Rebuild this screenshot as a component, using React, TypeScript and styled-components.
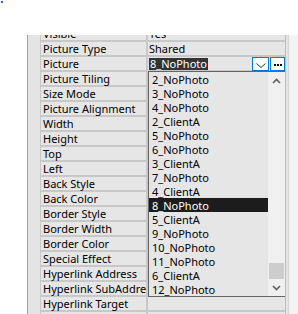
import { useLayoutEffect, useRef } from 'react'
import styled, { createGlobalStyle } from 'styled-components'

const GlobalStyle = createGlobalStyle`
	html, body {
		margin: 0;
		padding: 0;
		background: #fff;
	}
	body {
		font-family: "Noto Sans", "Segoe UI", sans-serif;
		font-size: 11px;
		color: #000;
	}
`

const Screen = styled.div`
	width: 298px;
	height: 314px;
	overflow: hidden;
	background: #fff;
	display: flex;
	flex-direction: column;
`

const FocusDot = styled.div`
	width: 2px;
	height: 2px;
	margin: 1px 0 0 1px;
	background: #3b5bdb;
`

const Panel = styled.div`
	flex: 1;
	min-height: 0;
	margin: 32px 0 0 27px;
	display: flex;
	border-left: 1px solid #a0a0a0;
	background: #f0f0f0;
`

const Gutter = styled.div`
	width: 12px;
	background: #e4e4e4;
`

const Sheet = styled.div`
	width: 244px;
	overflow: hidden;
	border-left: 1px solid #c8c8c8;
	border-right: 1px solid #bdbdbd;
`

const Rows = styled.div`
	position: relative;
`

const Row = styled.div`
	display: grid;
	grid-template-columns: 105px 137px;
	column-gap: 2px;
	padding-bottom: 2px;
	background: #c8c8c8;
`

const NameCell = styled.div`
	height: 13px;
	line-height: 13px;
	padding-left: 2px;
	background: #e6e6e6;
	white-space: nowrap;
	overflow-x: clip;
	overflow-y: visible;
`

const ValueCell = styled.div`
	position: relative;
	height: 13px;
	line-height: 13px;
	padding-left: 1px;
	background: #e6e6e6;
	display: flex;
	align-items: flex-start;
	white-space: nowrap;
`

const Selected = styled.span`
	margin-top: 1px;
	height: 12px;
	line-height: 12px;
	padding: 0 1px;
	background: #333;
	color: #fff;
`

const Buttons = styled.div`
	margin-left: auto;
	display: flex;
	gap: 1px;
`

const EditButton = styled.div<{ $w: number; $low?: boolean }>`
	box-sizing: border-box;
	width: ${(p) => p.$w}px;
	height: 14px;
	padding-bottom: ${(p) => (p.$low ? 2 : 0)}px;
	border: 1px solid #0078d7;
	background: #fff;
	display: flex;
	align-items: ${(p) => (p.$low ? 'flex-end' : 'center')};
	justify-content: center;
	gap: 1px;
`

const Dot = styled.span`
	width: 2px;
	height: 2px;
	margin-top: 2px;
	background: #000;
`

const RightPane = styled.div`
	flex: 1;
	border-left: 2px solid #e4e4e4;
	box-shadow: inset 1px 0 #d4d4d4;
	background: #f3f3f3;
`

const DropList = styled.div`
	position: absolute;
	top: 14px;
	left: 0;
	z-index: 2;
	box-sizing: border-box;
	width: 138px;
	height: 226px;
	border: 1px solid #646464;
	background: #e6e6e6;
	display: flex;
`

const Items = styled.div`
	flex: 1;
	overflow: hidden;
`

const Item = styled.div<{ $active?: boolean }>`
	height: 14px;
	line-height: 15px;
	padding-left: 3px;
	background: ${(p) => (p.$active ? '#1c1c1c' : 'transparent')};
	color: ${(p) => (p.$active ? '#fff' : '#000')};
`

const ScrollBar = styled.div`
	width: 17px;
	background: #f0f0f0;
	display: flex;
	flex-direction: column;
`

const ArrowBox = styled.div`
	height: 17px;
	display: flex;
	align-items: center;
	justify-content: center;
`

const Track = styled.div`
	flex: 1;
	display: flex;
	flex-direction: column;
	justify-content: flex-end;
`

const Thumb = styled.div`
	height: 16px;
	margin: 0 1px;
	background: #cdcdcd;
`

const names = [
	'Visible',
	'Picture Type',
	'Picture',
	'Picture Tiling',
	'Size Mode',
	'Picture Alignment',
	'Width',
	'Height',
	'Top',
	'Left',
	'Back Style',
	'Back Color',
	'Border Style',
	'Border Width',
	'Border Color',
	'Special Effect',
	'Hyperlink Address',
	'Hyperlink SubAddress',
	'Hyperlink Target',
	'',
]

const values: Record<string, string> = {
	Visible: 'Yes',
	'Picture Type': 'Shared',
}

const pictures = [
	'2_NoPhoto',
	'3_NoPhoto',
	'4_NoPhoto',
	'2_ClientA',
	'5_NoPhoto',
	'6_NoPhoto',
	'3_ClientA',
	'7_NoPhoto',
	'4_ClientA',
	'8_NoPhoto',
	'5_ClientA',
	'9_NoPhoto',
	'10_NoPhoto',
	'11_NoPhoto',
	'6_ClientA',
	'12_NoPhoto',
]

const Chevron = ({ up }: { up?: boolean }) => (
	<svg width="9" height="6" viewBox="0 0 9 6">
		<polyline
			points={up ? '1,5 4.5,1.5 8,5' : '1,1 4.5,4.5 8,1'}
			fill="none"
			stroke="#606060"
			strokeWidth="1.7"
		/>
	</svg>
)

const PicturePicker = () => (
	<>
		<Selected>8_NoPhoto</Selected>
		<Buttons>
			<EditButton $w={17} $low>
				<svg width="10" height="5" viewBox="0 0 10 5">
					<polyline points="0.5,0.5 5,4.5 9.5,0.5" fill="none" stroke="#333" strokeWidth="1" />
				</svg>
			</EditButton>
			<EditButton $w={15}>
				<Dot />
				<Dot />
				<Dot />
			</EditButton>
		</Buttons>
		<DropList>
			<Items>
				{pictures.map((p) => (
					<Item key={p} $active={p === '8_NoPhoto'}>
						{p}
					</Item>
				))}
			</Items>
			<ScrollBar>
				<ArrowBox>
					<Chevron up />
				</ArrowBox>
				<Track>
					<Thumb />
				</Track>
				<ArrowBox>
					<Chevron />
				</ArrowBox>
			</ScrollBar>
		</DropList>
	</>
)

const App = () => {
	const sheet = useRef<HTMLDivElement>(null)

	useLayoutEffect(() => {
		if (sheet.current) sheet.current.scrollTop = 8
	}, [])

	return (
		<Screen>
			<GlobalStyle />
			<FocusDot />
			<Panel>
				<Gutter />
				<Sheet ref={sheet}>
					<Rows>
						{names.map((n, i) => (
							<Row key={i}>
								<NameCell>{n}</NameCell>
								<ValueCell>{n === 'Picture' ? <PicturePicker /> : values[n]}</ValueCell>
							</Row>
						))}
					</Rows>
				</Sheet>
				<RightPane />
			</Panel>
		</Screen>
	)
}

export default App
